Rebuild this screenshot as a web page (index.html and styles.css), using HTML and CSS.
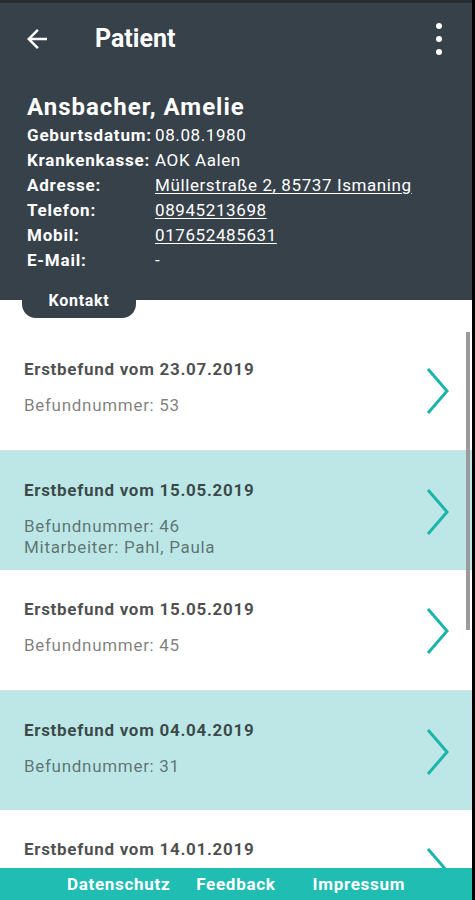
FILE: index.html
```html
<!DOCTYPE html>
<html lang="de">
<head>
    <meta charset="UTF-8">
    <meta name="viewport" content="width=device-width, initial-scale=1.0">
    <title>Patient</title>
    <link rel="stylesheet" href="styles.css">
</head>
<body>

    <div class="app">
        <!-- Kopfbereich mit Patientendaten -->
        <header class="header">
            <div class="appbar">
                <svg class="back" viewBox="0 0 24 24" width="30" height="30">
                    <path d="M20 11H7.83l5.59-5.59L12 4l-8 8 8 8 1.41-1.41L7.83 13H20v-2z" fill="#fff"/>
                </svg>
                <h1 class="title">Patient</h1>
                <div class="kebab"><span></span><span></span><span></span></div>
            </div>

            <div class="patient">
                <h2 class="name">Ansbacher, Amelie</h2>
                <div class="info">
                    <span class="label">Geburtsdatum:</span><span>08.08.1980</span>
                    <span class="label">Krankenkasse:</span><span>AOK Aalen</span>
                    <span class="label">Adresse:</span><a href="#">Müllerstraße 2, 85737 Ismaning</a>
                    <span class="label">Telefon:</span><a href="#">08945213698</a>
                    <span class="label">Mobil:</span><a href="#">017652485631</a>
                    <span class="label">E-Mail:</span><span>-</span>
                </div>
            </div>

            <div class="tab">Kontakt</div>
        </header>

        <!-- Liste der Befunde -->
        <div class="list">
            <div class="item">
                <div class="text">
                    <div class="item-title">Erstbefund vom 23.07.2019</div>
                    <div class="item-sub">Befundnummer: 53</div>
                </div>
                <svg class="chevron" viewBox="0 0 24 48" width="24" height="48"><path d="M3 2 L22 24 L3 46"/></svg>
            </div>
            <div class="item marked">
                <div class="text">
                    <div class="item-title">Erstbefund vom 15.05.2019</div>
                    <div class="item-sub">Befundnummer: 46<br>Mitarbeiter: Pahl, Paula</div>
                </div>
                <svg class="chevron" viewBox="0 0 24 48" width="24" height="48"><path d="M3 2 L22 24 L3 46"/></svg>
            </div>
            <div class="item">
                <div class="text">
                    <div class="item-title">Erstbefund vom 15.05.2019</div>
                    <div class="item-sub">Befundnummer: 45</div>
                </div>
                <svg class="chevron" viewBox="0 0 24 48" width="24" height="48"><path d="M3 2 L22 24 L3 46"/></svg>
            </div>
            <div class="item marked">
                <div class="text">
                    <div class="item-title">Erstbefund vom 04.04.2019</div>
                    <div class="item-sub">Befundnummer: 31</div>
                </div>
                <svg class="chevron" viewBox="0 0 24 48" width="24" height="48"><path d="M3 2 L22 24 L3 46"/></svg>
            </div>
            <div class="item">
                <div class="text">
                    <div class="item-title">Erstbefund vom 14.01.2019</div>
                </div>
                <svg class="chevron" viewBox="0 0 24 48" width="24" height="48"><path d="M3 2 L22 24 L3 46"/></svg>
            </div>
            <div class="scrollbar"></div>
        </div>

        <!-- Fusszeile -->
        <footer class="footer">
            <a href="#">Datenschutz</a>
            <a href="#">Feedback</a>
            <a href="#" class="last">Impressum</a>
        </footer>
    </div>

</body>
</html>
```

FILE: styles.css
```css
/* Grundlayout */
body {
    margin: 0;
    background: #000;
    font-family: Roboto, "Noto Sans", Arial, sans-serif;
}

.app {
    width: 472px;
    height: 900px;
    display: flex;
    flex-direction: column;
    overflow: hidden;
    background: #fff;
}

/* Kopfbereich */
.header {
    background: #37414a;
    border-top: 3px solid #262d33;
    color: #fff;
}

.appbar {
    height: 75px;
    display: flex;
    align-items: center;
    padding: 0 0 0 22px;
}

.back {
    display: block;
    margin-top: -4px;
}

.title {
    margin: -4px 0 0 43px;
    font-size: 25px;
    font-weight: 700;
    flex: 1;
}

.kebab {
    display: flex;
    flex-direction: column;
    gap: 7px;
    margin: -4px 30px 0 0;
}

.kebab span {
    width: 6px;
    height: 6px;
    border-radius: 50%;
    background: #fff;
}

.patient {
    padding: 15px 0 0 27px;
}

.name {
    margin: 0 0 2px;
    font-size: 24px;
    line-height: 28px;
    font-weight: 700;
    letter-spacing: 1px;
}

.info {
    display: grid;
    grid-template-columns: 128px auto;
    font-size: 17px;
    line-height: 25px;
    letter-spacing: 0.6px;
}

.info .label {
    font-weight: 700;
    letter-spacing: 0.8px;
    white-space: nowrap;
}

.info a {
    color: #fff;
    text-decoration: underline;
    text-underline-offset: 2px;
    justify-self: start;
}

/* Reiter unter dem Kopf */
.tab {
    position: relative;
    z-index: 1;
    width: 114px;
    height: 34px;
    line-height: 34px;
    margin: 11px 0 -18px 22px;
    background: #37414a;
    border-radius: 0 0 14px 14px;
    text-align: center;
    font-size: 16px;
    font-weight: 700;
    letter-spacing: 0.7px;
}

/* Befundliste */
.list {
    position: relative;
    flex: 1;
    overflow: hidden;
    padding-top: 30px;
}

.item {
    height: 120px;
    box-sizing: border-box;
    display: flex;
    align-items: center;
    padding: 0 23px 0 24px;
}

.item.marked {
    background: #bce7e6;
    border-top: 1px solid #d9dfdf;
}

.text {
    flex: 1;
    align-self: flex-start;
    padding-top: 29px;
    letter-spacing: 0.7px;
}

.item-title {
    font-size: 17px;
    line-height: 20px;
    font-weight: 700;
    color: rgba(0, 0, 0, 0.7);
}

.item-sub {
    margin-top: 16px;
    font-size: 17px;
    line-height: 21px;
    color: rgba(0, 0, 0, 0.52);
}

.chevron {
    display: block;
    margin-top: 2px;
}

.chevron path {
    fill: none;
    stroke: #1cb5ab;
    stroke-width: 3;
}

.scrollbar {
    position: absolute;
    top: 32px;
    right: 2px;
    width: 4px;
    height: 298px;
    background: #9b9b9b;
}

/* Fusszeile */
.footer {
    height: 32px;
    background: #1fbdb2;
    display: flex;
    justify-content: center;
    align-items: center;
    gap: 26px;
}

.footer a {
    color: #fff;
    font-size: 17px;
    font-weight: 700;
    letter-spacing: 0.7px;
    text-decoration: none;
}

.footer a.last {
    margin-left: 11px;
}
```
